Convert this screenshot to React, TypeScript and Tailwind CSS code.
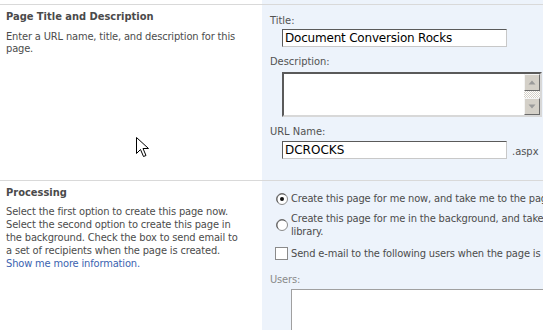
import React from "react";

const F = "font-['Tahoma','DejaVu_Sans_Condensed','DejaVu_Sans',sans-serif]";

function Radio({ checked }: { checked?: boolean }) {
  return (
    <svg width="12" height="12" viewBox="0 0 12 12" className="shrink-0">
      <circle cx="6" cy="6" r="5.5" fill="#fff" stroke="#8a8a8a" />
      <path d="M2.2 9.5 A5 5 0 0 1 2.5 2.5 A5 5 0 0 1 9.5 2.2" fill="none" stroke="#5a5a5a" strokeWidth="1" />
      {checked && <circle cx="6" cy="6" r="2" fill="#111" />}
    </svg>
  );
}

function Cursor() {
  return (
    <svg width="14" height="22" viewBox="0 0 14 22" className="absolute left-[136px] top-[137px]">
      <path
        d="M0.5 0.5 L0.5 16.5 L4.5 12.5 L7.5 19.5 L10 18.5 L7 11.5 L12.5 11.5 Z"
        fill="#fff"
        stroke="#000"
        strokeWidth="1"
        strokeLinejoin="miter"
      />
    </svg>
  );
}

function ScrollBtn({ up }: { up?: boolean }) {
  return (
    <div className="w-[16px] h-[17px] bg-[#d4d0c8] border border-t-[#f4f4f4] border-l-[#f4f4f4] border-r-[#6a6a6a] border-b-[#6a6a6a] flex items-center justify-center">
      <svg width="8" height="5" viewBox="0 0 8 5">
        {up ? <path d="M0.5 4.5 L4 0.5 L7.5 4.5 Z" fill="#9a9a9a" /> : <path d="M0.5 0.5 L4 4.5 L7.5 0.5 Z" fill="#9a9a9a" />}
      </svg>
    </div>
  );
}

export default function App() {
  return (
    <div className={`relative w-[543px] h-[330px] overflow-hidden bg-white ${F} text-[11px] leading-[13px] text-[#4c4c4c]`}>
      {/* top strip */}
      <div className="flex h-[4px]">
        <div className="w-[262px] bg-white" />
        <div className="flex-1 bg-[#edf3fb]" />
      </div>

      {/* Section 1 */}
      <div className="flex h-[176px] border-t border-[#d9d9d9]">
        <div className="w-[262px] shrink-0 bg-white pl-[6px] pt-[5px] pr-[20px]">
          <div className="font-bold text-[#4a4a4a]">Page Title and Description</div>
          <div className="mt-[8px] leading-[12px] w-[236px] tracking-[-0.15px]">Enter a URL name, title, and description for this page.</div>
        </div>
        <div className="flex-1 bg-[#edf3fb] pl-[8px] pt-[9px]">
          <div className="text-[#525252]">Title:</div>
          <div className="ml-[12px] mt-[2px] w-[225px] h-[18px] bg-white border border-t-[#5a5a5a] border-l-[#5a5a5a] border-r-[#c8c8c8] border-b-[#c8c8c8] flex items-center pl-[2px] text-[12px] text-black font-['DejaVu_Sans',sans-serif] tracking-[-0.2px]">
            Document Conversion Rocks
          </div>
          <div className="mt-[8px] text-[#525252]">Description:</div>
          <div className="ml-[12px] mt-[4px] w-[260px] h-[45px] bg-white border-2 border-t-[#5a5a5a] border-l-[#5a5a5a] border-r-[#d8d8d8] border-b-[#d8d8d8] flex justify-end">
            <div className="w-[16px] h-full flex flex-col">
              <ScrollBtn up />
              <div className="flex-1 bg-[repeating-conic-gradient(#d4d0c8_0_25%,#ffffff_0_50%)] bg-[length:2px_2px]" />
              <ScrollBtn />
            </div>
          </div>
          <div className="mt-[8px] text-[#525252]">URL Name:</div>
          <div className="flex items-end mt-[3px]">
            <div className="ml-[12px] w-[225px] h-[18px] bg-white border border-t-[#5a5a5a] border-l-[#5a5a5a] border-r-[#c8c8c8] border-b-[#c8c8c8] flex items-center pl-[2px] text-[12px] text-black font-['DejaVu_Sans',sans-serif]">
              DCROCKS
            </div>
            <div className="ml-[5px] mb-[1px] text-[#525252]">.aspx</div>
          </div>
        </div>
      </div>

      {/* Section 2 */}
      <div className="flex h-[150px] border-t border-[#d9d9d9]">
        <div className="w-[262px] shrink-0 bg-white pl-[6px] pt-[5px]">
          <div className="font-bold text-[#4a4a4a]">Processing</div>
          <div className="mt-[6px] w-[236px] tracking-[-0.15px]">
            Select the first option to create this page now. Select the second option to create this page in the background. Check the box to send email to a set of recipients when the page is created.{" "}
            <span className="text-[#3a63b0]">Show me more information.</span>
          </div>
        </div>
        <div className="flex-1 min-w-0 bg-[#edf3fb] pl-[14px] pt-[11px] text-[#4c4c4c] tracking-[-0.15px]">
          <div className="flex items-center gap-[3px] whitespace-nowrap">
            <Radio checked />
            <span>Create this page for me now, and take me to the page when it is created.</span>
          </div>
          <div className="flex items-center gap-[3px] mt-[7px]">
            <Radio />
            <span className="whitespace-nowrap leading-[13px]">
              Create this page for me in the background, and take me to the page
              <br />
              library.
            </span>
          </div>
          <div className="flex items-center gap-[3px] mt-[9px] -ml-[1px] whitespace-nowrap">
            <div className="w-[13px] h-[13px] bg-white border border-[#8a8a8a] shrink-0" />
            <span>Send e-mail to the following users when the page is created:</span>
          </div>
          <div className="mt-[13px] -ml-[6px] text-[#8a8a8a]">Users:</div>
          <div className="ml-[15px] mt-[3px] w-[300px] h-[60px] bg-white border border-[#a0a0a0]" />
        </div>
      </div>

      <Cursor />
    </div>
  );
}
